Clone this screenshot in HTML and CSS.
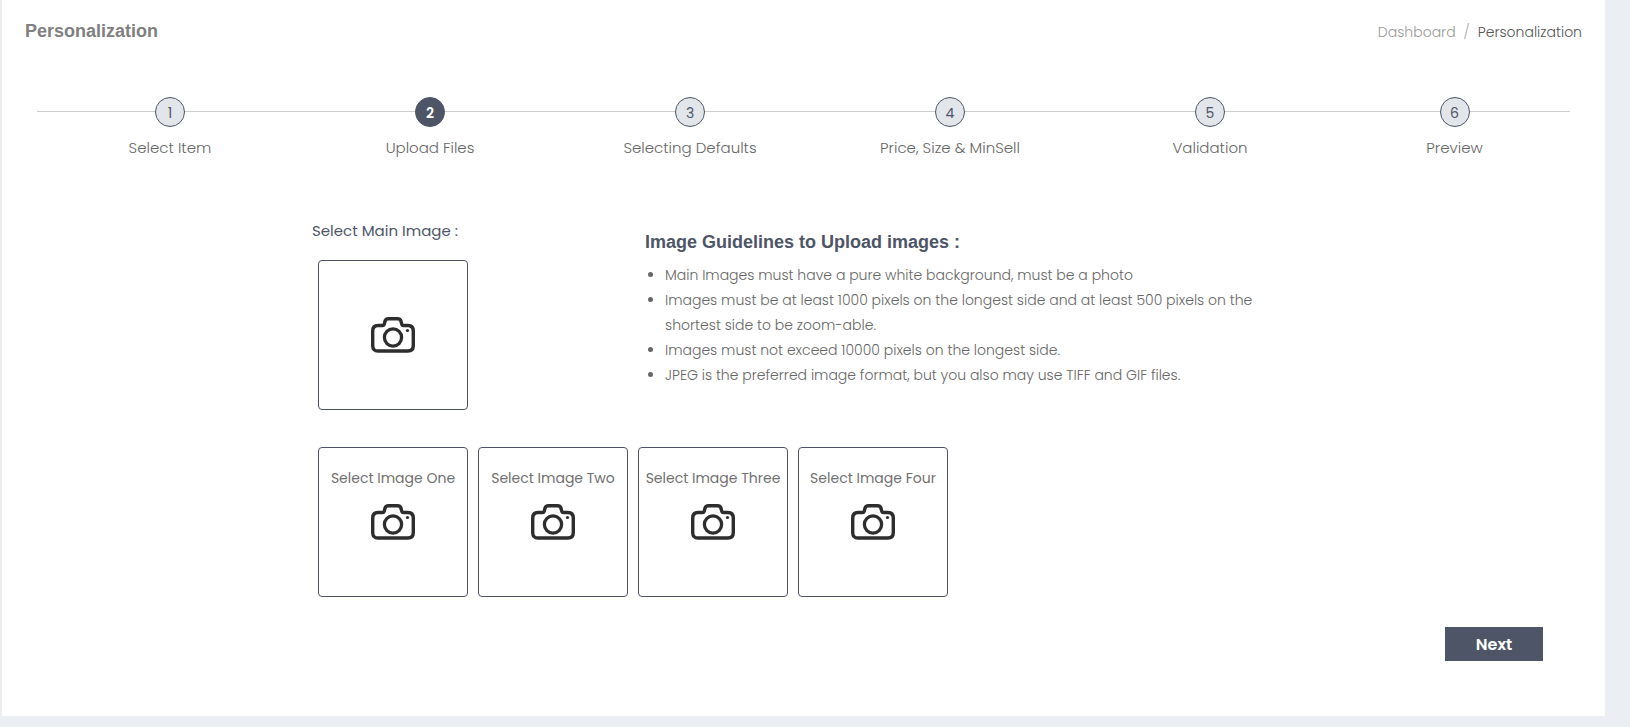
FILE: index.html
```html
<!DOCTYPE html>
<html lang="en">
<head>
<meta charset="utf-8">
<meta name="viewport" content="width=device-width, initial-scale=1">
<title>Personalization</title>
<link rel="stylesheet" href="styles.css">
</head>
<body>
<svg class="sprite" aria-hidden="true">
  <symbol id="camera" viewBox="0 0 44 36">
    <path d="M7 8.500H11.500Q13 8.500 13.300 7L13.900 4.500Q14.600 1.800 17.500 1.800H26.500Q29.400 1.800 30.100 4.500L30.700 7Q31 8.500 32.500 8.500H37Q42.300 8.500 42.300 14V28.500Q42.300 34 37 34H7Q1.700 34 1.700 28.500V14Q1.700 8.500 7 8.500Z" fill="none" stroke="#2d2d2d" stroke-width="3.400"/>
    <circle cx="22" cy="20.500" r="8.600" fill="none" stroke="#2d2d2d" stroke-width="3.300"/>
    <circle cx="36.500" cy="13.500" r="1.600" fill="#2d2d2d"/>
  </symbol>
</svg>
<main class="panel">
  <header class="header">
    <h1 class="title">Personalization</h1>
    <nav class="crumbs" aria-label="Breadcrumb">
      <a class="crumb-link" href="#">Dashboard</a>
      <span class="crumb-sep">/</span>
      <span>Personalization</span>
    </nav>
  </header>

  <ol class="steps">
    <li class="step"><span class="dot">1</span><span>Select Item</span></li>
    <li class="step" aria-current="step"><span class="dot dot-active">2</span><span>Upload Files</span></li>
    <li class="step"><span class="dot">3</span><span>Selecting Defaults</span></li>
    <li class="step"><span class="dot">4</span><span>Price, Size &amp; MinSell</span></li>
    <li class="step"><span class="dot">5</span><span>Validation</span></li>
    <li class="step"><span class="dot">6</span><span>Preview</span></li>
  </ol>

  <form class="form">
    <div class="upper">
      <section class="main-image">
        <h2 class="field-title" id="main-title">Select Main Image :</h2>
        <label class="tile">
          <svg class="camera"><use href="#camera"/></svg>
          <input class="file" type="file" accept="image/*" aria-labelledby="main-title">
        </label>
      </section>
      <section class="guidelines">
        <h2 class="guide-title">Image Guidelines to Upload images :</h2>
        <ul class="guide-list">
          <li>Main Images must have a pure white background, must be a photo</li>
          <li>Images must be at least 1000 pixels on the longest side and at least 500 pixels on the shortest side to be zoom-able.</li>
          <li>Images must not exceed 10000 pixels on the longest side.</li>
          <li>JPEG is the preferred image format, but you also may use TIFF and GIF files.</li>
        </ul>
      </section>
    </div>
    <div class="tiles">
      <label class="tile"><span class="tile-text">Select Image One</span><svg class="camera"><use href="#camera"/></svg><input class="file" type="file" accept="image/*"></label>
      <label class="tile"><span class="tile-text">Select Image Two</span><svg class="camera"><use href="#camera"/></svg><input class="file" type="file" accept="image/*"></label>
      <label class="tile"><span class="tile-text">Select Image Three</span><svg class="camera"><use href="#camera"/></svg><input class="file" type="file" accept="image/*"></label>
      <label class="tile"><span class="tile-text">Select Image Four</span><svg class="camera"><use href="#camera"/></svg><input class="file" type="file" accept="image/*"></label>
    </div>
    <div class="actions"><button class="next" type="button">Next</button></div>
  </form>
</main>
</body>
</html>
```
FILE: styles.css
```css
* { box-sizing: border-box; }

body {
  margin: 0;
  padding: 0 25px 10px 2px;
  background: #ebeff4;
  color: #666;
  font: 300 14px/25px Poppins, Inter, "Open Sans", sans-serif;
  font-feature-settings: "cv11";
}

h1, h2, ol, ul { margin: 0; padding: 0; }

.sprite { display: none; }

.panel {
  background: #fff;
  padding: 19px 23px 55px;
}

.header {
  display: flex;
  justify-content: space-between;
  align-items: flex-start;
}

.title {
  font: bold 18px/25px "Liberation Sans", Arial, sans-serif;
  color: #808080;
}

.crumbs {
  display: flex;
  gap: 8px;
  padding-top: 1px;
  color: #555;
}

.crumb-link {
  color: #999;
  text-decoration: none;
}

.crumb-sep { color: #aaa; }

.steps {
  position: relative;
  display: grid;
  grid-template-columns: 266fr 254fr 266fr 254fr 266fr 223fr;
  margin: 52px 12px 0;
  padding-right: 4px;
  list-style: none;
  font-size: 15px;
}

.steps::before {
  content: "";
  position: absolute;
  top: 14px;
  left: 0;
  right: 0;
  height: 1px;
  background: #ccc;
}

.step {
  display: flex;
  flex-direction: column;
  align-items: center;
  gap: 8px;
}

.dot {
  position: relative;
  width: 30px;
  height: 30px;
  border: 1px solid #4d5567;
  border-radius: 50%;
  background: #e2e6ea;
  color: #4d5567;
  font-size: 14px;
  font-weight: 400;
  line-height: 30px;
  text-align: center;
}

.dot-active {
  background: #4d5567;
  color: #fff;
  font-weight: 600;
}

.form { padding: 58px 0 0 287px; }

.upper {
  display: grid;
  grid-template-columns: 333px minmax(0, 610px);
}

.field-title {
  margin-bottom: 17px;
  color: #4d5567;
  font-size: 15px;
  font-weight: 400;
}

.main-image .tile { margin-left: 6px; }

.tile {
  position: relative;
  display: flex;
  align-items: center;
  justify-content: center;
  width: 150px;
  height: 150px;
  border: 1px solid #4d5067;
  border-radius: 4px;
  cursor: pointer;
}

.tile-text {
  position: absolute;
  top: 18px;
  left: 0;
  right: 0;
  text-align: center;
  font-weight: 400;
  color: #707070;
}

.camera {
  width: 44px;
  height: 36px;
}

.file {
  position: absolute;
  inset: 0;
  width: 100%;
  height: 100%;
  opacity: 0;
  cursor: pointer;
}

.guidelines { padding-top: 12px; }

.guide-title {
  margin-bottom: 8px;
  color: #4d5567;
  font: bold 18px/25px "Liberation Sans", Arial, sans-serif;
}

.guide-list { padding-left: 20px; }

.tiles {
  display: flex;
  gap: 10px;
  margin: 37px 0 30px 6px;
}

.actions {
  display: flex;
  justify-content: flex-end;
  padding-right: 39px;
}

.next {
  width: 98px;
  height: 34px;
  border: 0;
  background: #4d5567;
  color: #fff;
  font: inherit;
  font-size: 16px;
  font-weight: 600;
}
```
